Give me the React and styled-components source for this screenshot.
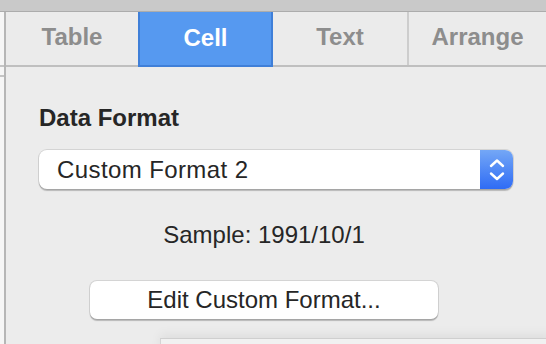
import React from "react";
import styled, { createGlobalStyle } from "styled-components";

const Global = createGlobalStyle`
  html, body { margin: 0; padding: 0; background: #ececec; }
  body { font-family: "Liberation Sans", Arial, sans-serif; }
  * { box-sizing: border-box; }
`;

const Page = styled.div`
  width: 546px;
  height: 344px;
  overflow: hidden;
  display: flex;
  flex-direction: column;
  background: #ececec;
`;

const TopBar = styled.div`
  height: 12px;
  flex: none;
  background: #c9c9c9;
  border-bottom: 1px solid #acacac;
`;

const Body = styled.div`
  flex: 1;
  display: flex;
  min-height: 0;
`;

const Strip = styled.div`
  width: 6px;
  flex: none;
  display: flex;
  flex-direction: column;
  background: #f6f6f6;
  border-right: 2px solid #b6b6b6;
`;

const StripCell = styled.div`
  height: ${(p) => p.$h}px;
  flex: none;
  border-bottom: 2px solid #c4c4c4;
`;

const Inspector = styled.div`
  flex: 1;
  display: flex;
  flex-direction: column;
  min-width: 0;
`;

const TabBar = styled.div`
  height: 55px;
  flex: none;
  display: flex;
  border-bottom: 2px solid #bfbfbf;
`;

const Tab = styled.div`
  width: ${(p) => (p.$w ? `${p.$w}px` : "auto")};
  flex: ${(p) => (p.$w ? "none" : "1")};
  display: flex;
  align-items: center;
  justify-content: center;
  font-size: 24px;
  font-weight: 700;
  color: ${(p) => (p.$active ? "#ffffff" : "#8d8d8d")};
  background: ${(p) => (p.$active ? "#5699f0" : "#ebebeb")};
  border-left: ${(p) =>
    p.$active ? "2px solid #3f7fd8" : p.$sep ? "2px solid #cdcdcd" : "none"};
  border-right: ${(p) => (p.$active ? "2px solid #3f7fd8" : "none")};
  margin-bottom: ${(p) => (p.$active ? "-2px" : "0")};
  border-bottom: ${(p) => (p.$active ? "2px solid #3f7fd8" : "none")};
  padding-bottom: ${(p) => (p.$active ? "2px" : "4px")};
`;

const Content = styled.div`
  flex: 1;
  display: flex;
  flex-direction: column;
  padding: 37px 33px 0 33px;
`;

const Label = styled.div`
  font-size: 24px;
  line-height: 28px;
  font-weight: 700;
  color: #262626;
`;

const Select = styled.div`
  margin-top: 18px;
  height: 39px;
  display: flex;
  align-items: center;
  background: #ffffff;
  border-radius: 8px;
  box-shadow: 0 0 0 1px rgba(0, 0, 0, 0.1), 0 1.5px 1px rgba(0, 0, 0, 0.22);
`;

const SelectText = styled.div`
  flex: 1;
  padding-left: 18px;
  font-size: 24px;
  letter-spacing: 0.4px;
  color: #262626;
  padding-top: 1px;
`;

const Stepper = styled.div`
  width: 33px;
  align-self: stretch;
  display: flex;
  align-items: center;
  justify-content: center;
  border-radius: 0 8px 8px 0;
  background: linear-gradient(#74a7f6, #2f6cf5);
`;

const Sample = styled.div`
  margin-top: 32px;
  padding-right: 24px;
  text-align: center;
  font-size: 24px;
  line-height: 28px;
  color: #262626;
`;

const Button = styled.div`
  margin: 32px 0 0 51px;
  width: 348px;
  height: 38px;
  display: flex;
  align-items: center;
  justify-content: center;
  background: #ffffff;
  border-radius: 7px;
  box-shadow: 0 0 0 1px rgba(0, 0, 0, 0.1), 0 1.5px 1px rgba(0, 0, 0, 0.22);
  font-size: 24px;
  color: #262626;
`;

const Popup = styled.div`
  margin: 19px -40px 0 121px;
  height: 60px;
  background: #f1f1f1;
  border-top: 1px solid #cfcfcf;
  border-left: 1px solid #d4d4d4;
  box-shadow: 0 -4px 10px rgba(0, 0, 0, 0.06);
`;

const Chevrons = () => (
  <svg width="16" height="24" viewBox="0 0 16 24" fill="none">
    <polyline points="2,8 8,2.5 14,8" stroke="#fff" strokeWidth="2.4" strokeLinecap="round" strokeLinejoin="round" />
    <polyline points="2,15.5 8,21 14,15.5" stroke="#fff" strokeWidth="2.4" strokeLinecap="round" strokeLinejoin="round" />
  </svg>
);

export default function App() {
  return (
    <>
      <Global />
      <Page>
        <TopBar />
        <Body>
          <Strip>
            <StripCell $h={55} />
            <StripCell $h={10} />
          </Strip>
          <Inspector>
            <TabBar>
              <Tab $w={132}>Table</Tab>
              <Tab $w={135} $active>Cell</Tab>
              <Tab $w={134}>Text</Tab>
              <Tab $sep>Arrange</Tab>
            </TabBar>
            <Content>
              <Label>Data Format</Label>
              <Select>
                <SelectText>Custom Format 2</SelectText>
                <Stepper>
                  <Chevrons />
                </Stepper>
              </Select>
              <Sample>Sample: 1991/10/1</Sample>
              <Button>Edit Custom Format...</Button>
              <Popup />
            </Content>
          </Inspector>
        </Body>
      </Page>
    </>
  );
}
